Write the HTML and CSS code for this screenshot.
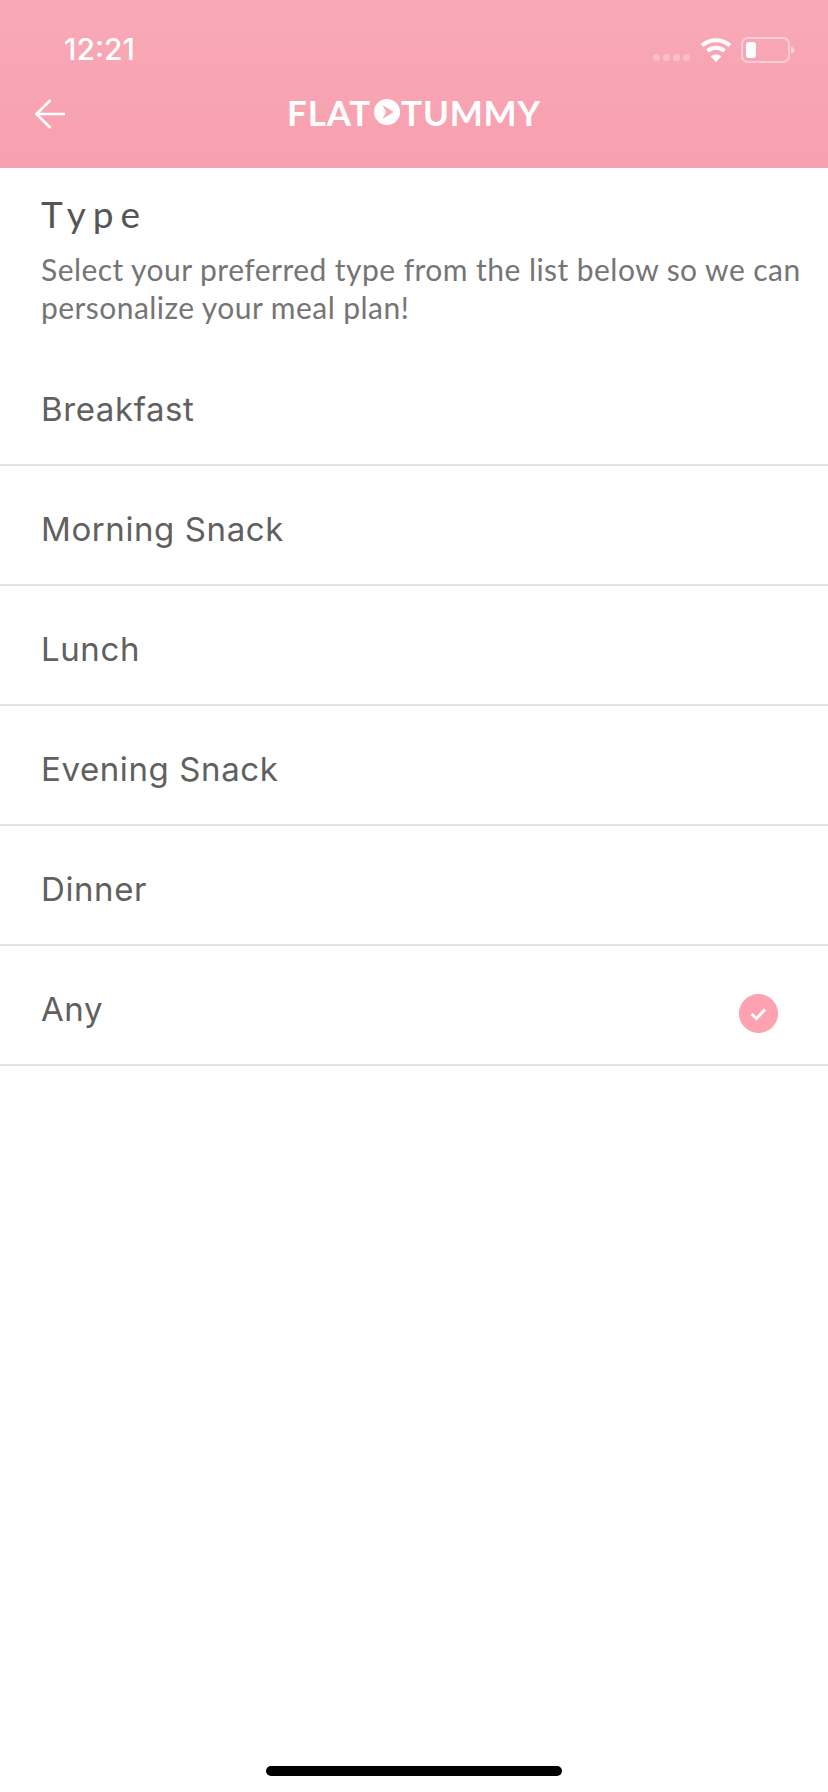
FILE: index.html
```html
<!DOCTYPE html>
<html lang="en">
<head>
<meta charset="utf-8">
<title>Type</title>
<link rel="stylesheet" href="styles.css">
</head>
<body>
<div class="page">
  <header class="header">
    <div class="status">
      <span class="time">12:21</span>
      <div class="status-icons">
        <div class="dots"><i></i><i></i><i></i><i></i></div>
        <svg class="wifi" width="32" height="25" viewBox="0 0 32 25"><path d="M2 8.5C10 1.5 22 1.5 30 8.5M7.5 14C12.5 9.8 19.5 9.8 24.5 14" fill="none" stroke="#fff" stroke-width="4"/><path d="M16 25L10.8 19.4C13.8 17 18.2 17 21.2 19.4Z" fill="#fff"/></svg>
        <svg class="battery" width="54" height="26" viewBox="0 0 54 26"><rect x="1" y="1" width="47" height="24" rx="6" fill="none" stroke="#fff" stroke-opacity=".45" stroke-width="2"/><rect x="5" y="5" width="10" height="16" rx="3" fill="#fff"/><path d="M50 9.5C52.5 10 53.5 11.5 53.5 13S52.5 16 50 16.5Z" fill="#fff" fill-opacity=".45"/></svg>
      </div>
    </div>
    <nav class="nav">
      <svg class="back" width="32" height="32" viewBox="0 0 32 32"><path d="M31 16H3M16.500 2L2.500 16L16.500 30" fill="none" stroke="#fff" stroke-width="2.600"/></svg>
      <div class="logo">
        <span>FLAT</span>
        <svg class="logo-play" width="26" height="26" viewBox="0 0 28 28"><circle cx="14" cy="14" r="14" fill="#fff"/><path d="M9 6.500L21 14L9 21.500L13.500 14Z" fill="#f9a3b2"/></svg>
        <span>TUMMY</span>
      </div>
    </nav>
  </header>
  <main>
    <section class="intro">
      <h1 class="title">Type</h1>
      <p class="desc">Select your preferred type from the list below so we can personalize your meal plan!</p>
    </section>
    <ul class="list">
      <li class="row">Breakfast</li>
      <li class="row">Morning Snack</li>
      <li class="row">Lunch</li>
      <li class="row">Evening Snack</li>
      <li class="row">Dinner</li>
      <li class="row">Any
        <svg class="check" width="39" height="39" viewBox="0 0 39 39"><circle cx="19.500" cy="19.500" r="19.500" fill="#fea1b1"/><path d="M12.500 20L17.500 24.500L26 15.500" fill="none" stroke="#fff" stroke-width="3"/></svg>
      </li>
    </ul>
  </main>
  <div class="home-wrap"><div class="home"></div></div>
</div>
</body>
</html>
```
FILE: styles.css
```css
* { box-sizing: border-box; }
html, body { margin: 0; padding: 0; background: #fff; }
.page {
  width: 828px;
  height: 1792px;
  display: flex;
  flex-direction: column;
  font-family: "Lato", "Liberation Sans", sans-serif;
  overflow: hidden;
}
.header {
  height: 168px;
  flex: none;
  background: linear-gradient(180deg, #f8a9b7 0%, #f8a0af 100%);
  color: #fff;
}
.status {
  height: 84px;
  padding: 34px 33px 0 64px;
  display: flex;
  justify-content: space-between;
  align-items: flex-start;
}
.time {
  font-family: "Inter", sans-serif;
  font-weight: 500;
  font-size: 30px;
  line-height: 30px;
}
.status-icons {
  display: flex;
  align-items: flex-start;
  padding-top: 3px;
}
.dots {
  display: flex;
  gap: 3px;
  margin: 17px 10px 0 0;
}
.dots i {
  width: 7px;
  height: 7px;
  border-radius: 50%;
  background: rgba(255, 255, 255, .3);
}
.wifi { margin-right: 9px; }
.nav {
  height: 84px;
  padding-bottom: 28px;
  display: flex;
  align-items: center;
  justify-content: center;
  position: relative;
}
.back { position: absolute; left: 34px; top: 14px; }
.logo {
  display: flex;
  align-items: center;
  font-weight: 700;
  font-size: 35px;
  line-height: 40px;
  letter-spacing: .8px;
}
.logo-play { margin: 0 1px 0 3px; }
main { flex: 1; }
.intro { padding: 25px 20px 0 41px; }
.title {
  margin: 0;
  font-weight: 400;
  font-size: 37px;
  line-height: 42px;
  letter-spacing: 7px;
  color: #555;
}
.desc {
  margin: 15px 0 0;
  font-size: 30px;
  line-height: 38px;
  letter-spacing: .45px;
  color: #757575;
}
.list {
  list-style: none;
  margin: 0;
  padding: 0;
  margin-top: 20px;
}
.row {
  height: 120px;
  padding: 7px 50px 0 41px;
  display: flex;
  align-items: center;
  justify-content: space-between;
  border-bottom: 2px solid #e2e2e2;
  font-family: "Inter", sans-serif;
  font-size: 33px;
  letter-spacing: .6px;
  color: #606060;
}
.check { margin-top: 9px; }
.home-wrap {
  height: 26px;
  flex: none;
  display: flex;
  justify-content: center;
}
.home {
  width: 296px;
  height: 10px;
  border-radius: 5px;
  background: #000;
}
```
